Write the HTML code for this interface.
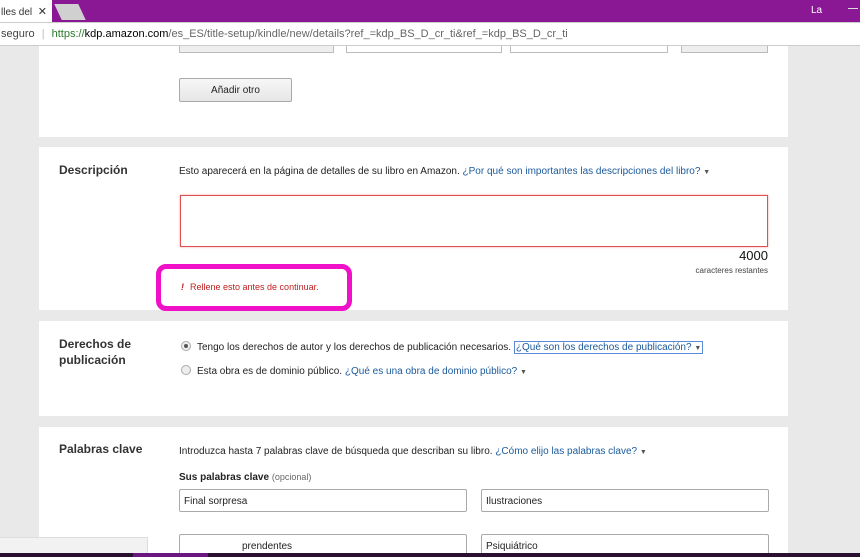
<!DOCTYPE html>
<html><head><meta charset="utf-8"><style>
*{margin:0;padding:0;box-sizing:border-box}
body{width:860px;height:557px;overflow:hidden;background:#e9e9e9;font-family:"Liberation Sans",Arial,sans-serif;position:relative;color:#111}
.a{position:absolute}
.panel{position:absolute;left:39px;width:749px;background:#fff}
.h{position:absolute;left:20px;font-size:12px;font-weight:bold;color:#333;line-height:16px}
.t{font-size:10px;color:#222;white-space:nowrap}
.l{color:#1a5a9c}
.in{position:absolute;border:1px solid #aaa;border-radius:2px;background:#fff;height:23px;font-size:10px;padding:6px 4px;color:#222}
.rad{display:inline-block;width:10px;height:10px;border:1px solid #aaa;border-radius:50%;background:#eee;vertical-align:-1px;margin-right:6px;position:relative}
</style></head><body>
<div class="a" style="left:0;top:0;width:860px;height:22px;background:#8a1894"></div>
<div class="a" style="left:0;top:0;width:52px;height:22px;background:#fff;font-size:10px;padding:5px 1px;color:#333">lles del &nbsp;<span style="font-size:11px">✕</span></div>
<div class="a" style="left:58px;top:4px;width:24px;height:16px;background:#d0d0d0;transform:skewX(25deg)"></div>
<div class="a t" style="left:811px;top:5px;color:#fff">La</div>
<div class="a" style="left:848px;top:8px;width:10px;height:1px;background:#ddd"></div>
<div class="a" style="left:0;top:22px;width:860px;height:24px;background:#fff;border-top:1px solid #ccc;border-bottom:1px solid #ccc"></div>
<div class="a t" style="left:1px;top:28px;font-size:11px;color:#444">seguro <span style="color:#bbb;margin:0 4px">|</span> <span style="color:#2a7a2a">https://</span><span style="color:#000">kdp.amazon.com</span><span style="color:#666">/es_ES/title-setup/kindle/new/details?ref_=kdp_BS_D_cr_ti&amp;ref_=kdp_BS_D_cr_ti</span></div>

<div class="panel" style="top:46px;height:91px">
 <div class="a" style="left:140px;top:0;width:155px;height:7px;background:#eee;border:1px solid #bbb;border-top:0"></div>
 <div class="a" style="left:307px;top:0;width:156px;height:7px;border:1px solid #bbb;border-top:0"></div>
 <div class="a" style="left:471px;top:0;width:158px;height:7px;border:1px solid #bbb;border-top:0"></div>
 <div class="a" style="left:642px;top:0;width:87px;height:7px;background:#eee;border:1px solid #bbb;border-top:0"></div>
 <div class="a t" style="left:140px;top:32px;width:113px;height:24px;border:1px solid #aaa;border-radius:2px;background:linear-gradient(#f7f7f7,#e6e6e6);text-align:center;line-height:23px">Añadir otro</div>
</div>

<div class="panel" style="top:147px;height:163px">
 <div class="h" style="top:15px">Descripción</div>
 <div class="a t" style="left:140px;top:19px">Esto aparecerá en la página de detalles de su libro en Amazon. <span class="l">¿Por qué son importantes las descripciones del libro?</span> <span style="font-size:7px;color:#555">▼</span></div>
 <div class="a" style="left:141px;top:48px;width:588px;height:52px;border:1px solid #e05050;box-shadow:0 0 2px #f0a0a0"></div>
 <div class="a" style="left:690px;top:101px;width:39px;text-align:right;font-size:13px;color:#111">4000</div>
 <div class="a" style="left:620px;top:119px;width:109px;text-align:right;font-size:8px;color:#444">caracteres restantes</div>
 <div class="a" style="left:117px;top:117px;width:196px;height:47px;border:5px solid #f010c8;border-radius:10px"></div>
 <div class="a t" style="left:142px;top:135px;color:#c02020;font-size:9px"><i style="font-weight:bold;margin-right:6px">!</i>Rellene esto antes de continuar.</div>
</div>

<div class="panel" style="top:321px;height:95px">
 <div class="h" style="top:15px">Derechos de<br>publicación</div>
 <div class="a t" style="left:142px;top:20px"><span class="rad"><span class="a" style="left:2px;top:2px;width:4px;height:4px;border-radius:50%;background:#555"></span></span>Tengo los derechos de autor y los derechos de publicación necesarios. <span class="l" style="border:1px solid #5a8ad8;padding:0 1px">¿Qué son los derechos de publicación? <span style="font-size:7px;color:#555">▼</span></span></div>
 <div class="a t" style="left:142px;top:44px"><span class="rad"></span>Esta obra es de dominio público. <span class="l">¿Qué es una obra de dominio público?</span> <span style="font-size:7px;color:#555">▼</span></div>
</div>

<div class="panel" style="top:427px;height:130px">
 <div class="h" style="top:14px">Palabras clave</div>
 <div class="a t" style="left:140px;top:19px">Introduzca hasta 7 palabras clave de búsqueda que describan su libro. <span class="l">¿Cómo elijo las palabras clave?</span> <span style="font-size:7px;color:#555">▼</span></div>
 <div class="a t" style="left:140px;top:45px;font-weight:bold">Sus palabras clave <span style="font-weight:normal;color:#666;font-size:9px">(opcional)</span></div>
 <div class="in" style="left:140px;top:62px;width:288px">Final sorpresa</div>
 <div class="in" style="left:442px;top:62px;width:288px">Ilustraciones</div>
 <div class="in" style="left:140px;top:107px;width:288px;padding-left:62px">prendentes</div>
 <div class="in" style="left:442px;top:107px;width:288px">Psiquiátrico</div>
</div>
<div class="a" style="left:0;top:537px;width:148px;height:20px;background:#f2f2f2;border-top:1px solid #ddd;border-right:1px solid #ddd"></div>
<div class="a" style="left:0;top:553px;width:860px;height:4px;background:#2a1030"></div>
<div class="a" style="left:133px;top:553px;width:75px;height:4px;background:#6a1880"></div>
</body></html>
